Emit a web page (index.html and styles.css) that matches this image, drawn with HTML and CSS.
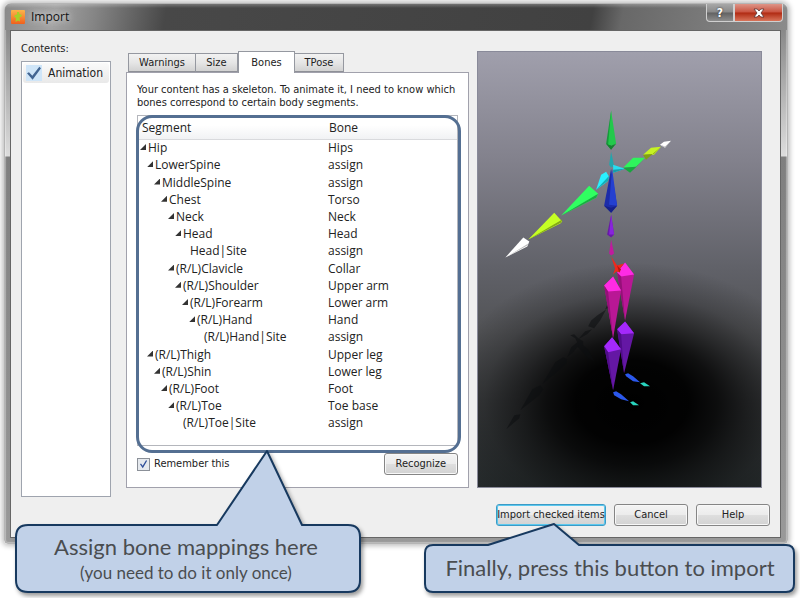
FILE: index.html
```html
<!DOCTYPE html>
<html lang="en">
<head>
<meta charset="utf-8">
<title>Import</title>
<link rel="stylesheet" href="styles.css">
</head>
<body>
<main class="window">
  <header class="titlebar">
    <svg class="app-icon" viewBox="0 0 14 14" aria-hidden="true">
      <defs><linearGradient id="app" x1="0" y1="0" x2="0" y2="1"><stop offset="0" stop-color="#fbb54a"/><stop offset="1" stop-color="#f0601c"/></linearGradient></defs>
      <rect width="14" height="14" rx="1" fill="url(#app)"/>
      <path d="M6 2l2 0 .5 2L11 5l-1 2-1.500 0 .5 4.500L7 10.500 4.500 12 5 8 3 6.500 4 5l2-.5z" fill="#a6cf2a"/>
    </svg>
    <h1 class="title">Import</h1>
    <div class="caption-buttons">
      <button class="caption help" aria-label="Help">?</button>
      <button class="caption close" aria-label="Close"><svg viewBox="0 0 12 10" width="12" height="10"><path d="M1 1h3.200L6 3 7.800 1H11L8 5l3 4H7.800L6 7 4.200 9H1l3-4z" fill="#fff" stroke="#5b3030" stroke-width=".8"/></svg></button>
    </div>
  </header>

  <div class="client">
    <div class="columns">
      <section class="contents">
        <h2 class="contents-label">Contents:</h2>
        <div class="contents-list">
          <label class="content-item"><input type="checkbox" class="big-check" checked>Animation</label>
        </div>
      </section>

      <section class="settings">
        <div class="tabs" role="tablist">
          <button class="tab warnings" role="tab">Warnings</button>
          <button class="tab size" role="tab">Size</button>
          <button class="tab active" role="tab" aria-selected="true">Bones</button>
          <button class="tab tpose" role="tab">TPose</button>
        </div>
        <div class="panel">
          <p class="intro">Your content has a skeleton. To animate it, I need to know which<br>bones correspond to certain body segments.</p>
          <div class="tree-box">
            <table class="tree">
              <thead><tr><th>Segment</th><th>Bone</th></tr></thead>
              <tbody>
                <tr><td class="l0 open">Hip</td><td>Hips</td></tr>
                <tr><td class="l1 open">LowerSpine</td><td>assign</td></tr>
                <tr><td class="l2 open">MiddleSpine</td><td>assign</td></tr>
                <tr><td class="l3 open">Chest</td><td>Torso</td></tr>
                <tr><td class="l4 open">Neck</td><td>Neck</td></tr>
                <tr><td class="l5 open">Head</td><td>Head</td></tr>
                <tr><td class="l6">Head|Site</td><td>assign</td></tr>
                <tr><td class="l4 open">(R/L)Clavicle</td><td>Collar</td></tr>
                <tr><td class="l5 open">(R/L)Shoulder</td><td>Upper arm</td></tr>
                <tr><td class="l6 open">(R/L)Forearm</td><td>Lower arm</td></tr>
                <tr><td class="l7 open">(R/L)Hand</td><td>Hand</td></tr>
                <tr><td class="l8">(R/L)Hand|Site</td><td>assign</td></tr>
                <tr><td class="l1 open">(R/L)Thigh</td><td>Upper leg</td></tr>
                <tr><td class="l2 open">(R/L)Shin</td><td>Lower leg</td></tr>
                <tr><td class="l3 open">(R/L)Foot</td><td>Foot</td></tr>
                <tr><td class="l4 open">(R/L)Toe</td><td>Toe base</td></tr>
                <tr><td class="l5">(R/L)Toe|Site</td><td>assign</td></tr>
              </tbody>
            </table>
            <div class="ring"></div>
          </div>
          <div class="panel-foot">
            <label class="remember"><input type="checkbox" class="small-check" checked>Remember this</label>
            <button class="btn">Recognize</button>
          </div>
        </div>
      </section>

      <svg class="viewport" viewBox="477 51 285 436" preserveAspectRatio="xMidYMid slice" role="img" aria-label="Skeleton preview">
        <defs>
          <linearGradient id="sky" x1="0" y1="0" x2="0" y2="1">
            <stop offset="0" stop-color="#a09fac"/><stop offset=".25" stop-color="#82818c"/><stop offset=".5" stop-color="#606168"/><stop offset=".64" stop-color="#525356"/><stop offset=".8" stop-color="#3a3c3e"/><stop offset="1" stop-color="#24292a"/>
          </linearGradient>
          <radialGradient id="pool" gradientUnits="userSpaceOnUse" cx="0" cy="0" r="1" gradientTransform="translate(632 402) scale(190 140)">
            <stop offset="0" stop-color="#000"/><stop offset=".3" stop-color="#000" stop-opacity=".96"/><stop offset=".45" stop-color="#000" stop-opacity=".78"/><stop offset=".6" stop-color="#000" stop-opacity=".5"/><stop offset=".78" stop-color="#000" stop-opacity=".2"/><stop offset="1" stop-color="#000" stop-opacity="0"/>
          </radialGradient>
        </defs>
        <rect x="477" y="51" width="285" height="436" fill="url(#sky)"/>
        <rect x="477" y="51" width="285" height="436" fill="url(#pool)"/>
        <g fill="#0c0e10" opacity=".55">
          <path d="M506 429l8-14 6-1-1 4zM520 410l12-21 8-4 3 4-4 6zM542 384l13-22 8-5 4 2-1 4-5 5zM567 357l4-10 6-5-2-4-5-3 4-1 4 4 5 3 0 6-6 0-4 5z"/>
          <path d="M578 339l7-8 7-2-5 5zM588 326l3-6 6-5 9-6-6 11-6 8zM605 309l4-9 4 0-1 5zM578 341l10 8 6 12-7-4-9-10z"/>
        </g>
        <path fill="#169b3b" d="M611 110l-5 33 5 6z"/><path fill="#23c94b" d="M611 110l5 33-4 2-4-1z"/><path fill="#15822f" d="M606 143l5 2 5-2-5 6z"/>
        <path fill="#22a6ad" d="M611 151l-2 13 2 3 3-2z"/>
        <path fill="#1c2ca9" d="M611 168l-7 37 7 7 6-7z"/><path fill="#2440d0" d="M612 168l5 37-8-1z"/><path fill="#16208a" d="M604 205l7 2 6-2-6 7z"/>
        <path fill="#29f0ff" d="M601 174l5-3 3 5-2 5-11 8z"/><path fill="#14adb8" d="M609 175l-1 5-12 9z"/>
        <path fill="#27def1" d="M613 164l12 4-12 4z"/><path fill="#169ba9" d="M613 172l0-3 12-1z"/>
        <path fill="#30ff61" d="M589 185l9 8-2 4-35 18z"/><path fill="#1ba943" d="M598 193l-2 4-35 18z"/>
        <path fill="#c6ff24" d="M554 212l8 9-2 2-32 16z"/><path fill="#83a818" d="M562 219l-1 3-33 17z"/>
        <path fill="#fff" d="M523 237l6 4-2 5-22 11z"/><path fill="#bbb" d="M528 243l-1 2-22 12z"/>
        <path fill="#2ff45c" d="M623 167l10-10 12 0-9 9z"/><path fill="#18a53e" d="M623 167l13-1 9-8-15 14z"/>
        <path fill="#c6f323" d="M643 154l8-7 10-1-7 8z"/><path fill="#829f13" d="M643 154l11-1 7-7-15 13z"/>
        <path fill="#fff" d="M660 144l4-3 7-1-6 7z"/><path fill="#aaa" d="M661 144l4 2 6-6-6 7z"/>
        <path fill="#681aa8" d="M611 214l-4 20 4 3 3-3z"/><path fill="#8924dc" d="M611 214l3 20-5 0z"/>
        <path fill="#c01b9e" d="M611 239l-2 14 2 2 3-2z"/>
        <path fill="#b91795" d="M617 272l8-10 9 12-9 46z"/><path fill="#ff2be4" d="M617 272l8-10 9 12-13 2z"/><path fill="#951078" d="M617 272l4 4 4 44z"/>
        <path fill="#f0281c" d="M611 256l6 9 7-2-4 5 0 4-4-1-3 3 2-6z"/><path fill="#b41810" d="M617 265l4 4-2 3z"/>
        <path fill="#b91795" d="M604 285l9-9 8 14-8 48z"/><path fill="#ff2be4" d="M604 285l9-9 8 14-13 1z"/><path fill="#951078" d="M604 285l4 6 5 47z"/>
        <path fill="#6417a4" d="M617 329l8-8 9 12-10 40z"/><path fill="#a429fb" d="M617 329l8-8 9 12-13 1z"/><path fill="#500c89" d="M617 329l4 5 3 39z"/>
        <path fill="#6417a4" d="M604 346l8-9 9 12-8 41z"/><path fill="#a429fb" d="M604 346l8-9 9 12-13 3z"/><path fill="#500c89" d="M604 346l4 6 5 38z"/>
        <g fill="#2b58ec"><path d="M625 374l3-1 5 3 7 6-7-1-7-5zM613 392l3-1 5 3 8 7-8-2-7-4z"/></g>
        <g fill="#29d5bf"><path d="M640 383l4-1 6 4-6 0zM630 402l3-1 6 4-6 0z"/></g>
      </svg>
    </div>

    <footer class="actions">
      <button class="btn default">Import checked items</button>
      <button class="btn">Cancel</button>
      <button class="btn">Help</button>
    </footer>
  </div>
</main>

<aside class="callout callout-map">
  <svg class="bubble" viewBox="0 0 350 152" aria-hidden="true"><path d="M13 77H202L252 3 287 77H333Q345 77 345 89V132Q345 144 333 144H13Q1 144 1 132V89Q1 77 13 77Z"/></svg>
  <p class="big">Assign bone mappings here</p>
  <p class="small">(you need to do it only once)</p>
</aside>
<aside class="callout callout-import">
  <svg class="bubble" viewBox="0 0 376 76" aria-hidden="true"><path d="M9 22H64L130 1 155 22H362Q370 22 370 30V61Q370 69 362 69H9Q1 69 1 61V30Q1 22 9 22Z"/></svg>
  <p class="big">Finally, press this button to import</p>
</aside>
</body>
</html>
```
FILE: styles.css
```css
* { box-sizing: border-box; }

body {
  margin: 0;
  padding: 3px 12px 0 4px;
  min-height: 100vh;
  position: relative;
  overflow: hidden;
  background: #fff;
  color: #222;
  font: 11px/14px "DejaVu Sans Condensed", "Open Sans", sans-serif;
}

h1, h2, p { margin: 0; font-weight: 400; }
button, input { font: inherit; color: inherit; margin: 0; }

/* Window frame */
.window {
  padding: 0 6px 5px 5px;
  border: 1px solid #b5b5b5;
  border-radius: 7px 7px 4px 4px;
  background:
    linear-gradient(#777 0, #ddd 152px, #7f7f7f 153px, #999 100%);
  box-shadow: 0 0 5px 2px rgba(0, 0, 0, .25), inset 0 0 1px 1px rgba(255, 255, 255, .35);
}

.titlebar {
  display: flex;
  align-items: center;
  height: 26px;
  margin: 0 -6px 0 -5px;
  padding: 0 0 0 6px;
  border-radius: 6px 6px 0 0;
  background:
    linear-gradient(rgba(255, 255, 255, .25), rgba(255, 255, 255, 0) 4px),
    linear-gradient(100deg, #8a8a8a 0, #a2a2a2 50px, #858585 90px, #484848 160px, #414141 580px, #686868 610px, #8b8b8b 100%);
}

.app-icon { width: 14px; height: 14px; }
.title {
  flex: 1;
  padding-left: 6px;
  color: #111;
  font: 12px/16px "Open Sans", "Noto Sans", sans-serif;
  text-shadow: 0 0 6px #ddd, 0 0 8px #ccc;
}

.caption-buttons { display: flex; align-self: flex-start; }
.caption {
  display: grid;
  place-items: center;
  height: 18px;
  padding: 0;
  border: 1px solid #d0d0d0;
  border-top: 0;
  color: #fff;
  font-size: 12px;
  font-weight: 700;
  line-height: 14px;
}
.caption.help {
  width: 28px;
  border-radius: 0 0 0 4px;
  background: linear-gradient(#a7a7a7, #898989 48%, #626262 52%, #8d8d8d);
  text-shadow: 0 0 2px #222;
}
.caption.close {
  width: 49px;
  margin-right: 4px;
  border-radius: 0 0 4px;
  background: linear-gradient(#de9588, #c95340 48%, #b02a12 52%, #d8745a);
}

.client {
  padding: 20px 11px 11px 10px;
  border: 1px solid #666;
  background: #efefef;
}
.columns { display: flex; align-items: stretch; }

/* Contents list */
.contents {
  display: flex;
  flex-direction: column;
  flex: 0 0 90px;
  margin: -10px 15px -9px 0;
}
.contents-label { font-size: 11px; line-height: 15px; margin-bottom: 5px; }
.contents-list {
  flex: 1;
  padding: 1px;
  border: 1px solid #9fa4ae;
  background: #fff;
}
.content-item {
  display: flex;
  align-items: center;
  gap: 6px;
  height: 20px;
  padding-left: 3px;
  border-radius: 3px;
  background: linear-gradient(#fafafa, #e9e9e9);
  font-size: 12px;
}
input[type="checkbox"] {
  appearance: none;
  display: grid;
  flex: none;
}
input[type="checkbox"]:checked::before {
  content: "";
  clip-path: polygon(0 52%, 14% 44%, 38% 70%, 88% 6%, 100% 16%, 40% 98%);
}
.big-check {
  width: 16px;
  height: 16px;
  padding: 1px;
  background: #cfe5f8;
}
.big-check::before { background: #426592; }
.small-check {
  width: 13px;
  height: 13px;
  padding: 1px 2px;
  border: 1px solid #8b9098;
  background: #e5e9ee;
}
.small-check::before { background: #2f4f9a; }

/* Tabs and panel */
.settings { flex: 345 1 0; min-width: 0; margin-right: 8px; }
.tabs { display: flex; align-items: flex-end; height: 21px; padding-left: 2px; }
.tab {
  height: 19px;
  padding: 0;
  border: 1px solid #9598a0;
  border-bottom-color: #8e9097;
  border-left-width: 0;
  background: linear-gradient(#f2f2f2, #e6e6e6 50%, #d2d2d2);
}
.tab.warnings { width: 68px; border-left-width: 1px; }
.tab.size { width: 42px; }
.tab.active {
  width: 57px;
  height: 22px;
  margin-bottom: -1px;
  border-left-width: 1px;
  border-bottom: 0;
  background: #fff;
}
.tab.tpose { width: 49px; }
.panel {
  padding: 10px 10px 12px;
  border: 1px solid #a1a1ac;
  background: #fff;
}
.intro { line-height: 13px; padding-bottom: 6px; white-space: nowrap; }

.tree-box {
  position: relative;
  padding-bottom: 13px;
  border: 1px solid #b4b6bc;
}
.ring {
  position: absolute;
  inset: -1px -4px -8px -2px;
  border: 3px solid #546f92;
  border-radius: 16px;
  pointer-events: none;
}
.tree {
  width: 100%;
  height: 316px;
  border-collapse: collapse;
  table-layout: fixed;
  font-family: "Open Sans", "Noto Sans", sans-serif;
  font-size: 12px;
  line-height: 16px;
}
.tree th {
  height: 23px;
  padding: 2px 0 0 4px;
  border-bottom: 1px solid #d9dadd;
  background: linear-gradient(#fff 40%, #f1f2f4);
  font-weight: 400;
  text-align: left;
}
.tree th:first-child { width: 187px; }
.tree td { padding: 0 0 0 3px; white-space: nowrap; }
.tree .l0 { padding-left: 2px; }
.tree .l1 { padding-left: 9px; }
.tree .l2 { padding-left: 16px; }
.tree .l3 { padding-left: 23px; }
.tree .l4 { padding-left: 30px; }
.tree .l5 { padding-left: 37px; }
.tree .l6 { padding-left: 44px; }
.tree .l7 { padding-left: 51px; }
.tree .l8 { padding-left: 58px; }
.tree td:first-child::before {
  content: "";
  display: inline-block;
  width: 6px;
  height: 6px;
  margin: 0 2px 2px 0;
}
.tree td.open::before {
  background: #333;
  clip-path: polygon(100% 0, 100% 100%, 0 100%);
}

.panel-foot {
  display: flex;
  align-items: center;
  justify-content: space-between;
  padding-top: 7px;
}
.remember { display: flex; align-items: center; gap: 4px; }

.btn {
  width: 74px;
  height: 22px;
  padding: 0;
  border: 1px solid #858585;
  border-radius: 3px;
  background: linear-gradient(#f4f4f4, #ececec 48%, #dedede 52%, #d2d2d2);
  box-shadow: inset 0 0 0 1px #f8f8f8;
  white-space: nowrap;
}
.btn.default {
  width: 110px;
  border-color: #3b9bc6;
  box-shadow: inset 0 0 0 1px #5cc8ee;
}

.viewport {
  flex: 285 1 0;
  min-width: 0;
  height: 437px;
  border: 1px solid #898a99;
  margin-right: 7px;
}

.actions {
  display: flex;
  justify-content: flex-end;
  gap: 8px;
  margin-right: -1px;
  padding-top: 16px;
}

/* Callouts floating over the window */
.callout {
  position: absolute;
  color: #4a4d50;
  font-family: Lato, sans-serif;
  text-align: center;
}
.bubble {
  position: absolute;
  inset: 0;
  z-index: -1;
  width: 100%;
  height: 100%;
  overflow: visible;
  filter: drop-shadow(2px 3px 2px rgba(0, 0, 0, .4));
}
.bubble path {
  fill: #c1d1e8;
  stroke: #17395f;
  stroke-width: 2;
  stroke-linejoin: round;
}
.callout-map { left: 15px; top: 448px; z-index: 1; width: 350px; height: 152px; padding: 85px 8px 0 0; }
.callout-import { left: 424px; top: 523px; z-index: 1; width: 376px; height: 76px; padding: 31px 4px 0 0; }
.big { font-size: 22px; line-height: 28px; white-space: nowrap; }
.small { font-size: 17px; line-height: 24px; }
```
